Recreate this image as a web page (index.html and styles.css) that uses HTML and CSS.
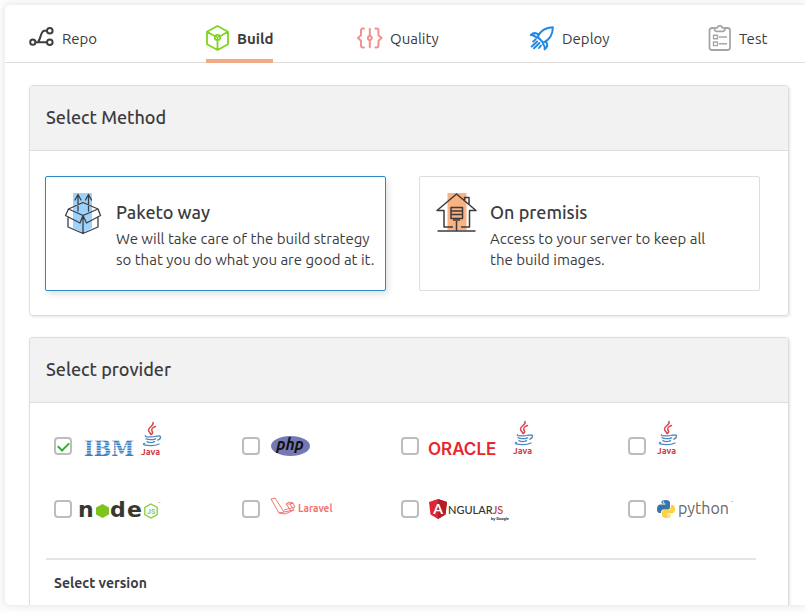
FILE: index.html
```html
<!DOCTYPE html>
<html lang="en">
<head>
<meta charset="utf-8">
<meta name="viewport" content="width=device-width, initial-scale=1">
<title>Build</title>
<link rel="stylesheet" href="styles.css">
</head>
<body>
<main class="shell">
  <nav class="tabs">
    <a class="tab" href="#repo">
      <svg width="26" height="26" viewBox="0 0 26 26" fill="none" stroke="#3f3f42" stroke-width="2"><circle cx="3.800" cy="17.200" r="2.600"/><circle cx="20.800" cy="17.200" r="2.800"/><circle cx="20.800" cy="5.800" r="2.800"/><path d="M6.600 17.200H18M9 16.500c2.800-1.500 2.300-9.500 6-10.700h3"/></svg>
      Repo</a>
    <a class="tab active" href="#build" aria-current="page">
      <svg width="24" height="26" viewBox="0 0 24 26" fill="none" stroke="#7fd321" stroke-width="1.800" stroke-linejoin="round"><path d="M11.500 1 22 6.800v12.400L11.500 25 1 19.200V6.800zM1 6.800l8 4.400M22 6.800l-8 4.400M11.500 25v-9"/><circle cx="11.500" cy="12.500" r="2.700"/><path d="M9.500 10.800l2 2 2-2M11.500 12.800V16" stroke-width="1.300"/></svg>
      Build</a>
    <a class="tab" href="#quality">
      <svg width="26" height="26" viewBox="0 0 26 26" fill="none" stroke="#f3918f" stroke-width="2" stroke-linecap="round" stroke-linejoin="round"><path d="M7 3.500H6Q4 3.500 4 5.500v4.800L1 13l3 2.700v4.800q0 2 2 2h1M18.500 3.500h1q2 0 2 2v4.800l3 2.700-3 2.700v4.800q0 2-2 2h-1M12.800 3.800v7M12.800 15.200v7"/><circle cx="12.800" cy="13" r="1.900"/></svg>
      Quality</a>
    <a class="tab" href="#deploy">
      <svg width="26" height="26" viewBox="0 0 26 26" fill="none" stroke="#2089e5" stroke-width="2" stroke-linecap="round" stroke-linejoin="round"><path d="M8.500 11.800C11.500 5.500 16 2.500 23.800 2.200c.2 7.800-3.200 12.300-9.500 15.600zM9.500 9.500Q5.500 6.500 1.800 10q2.800-.4 6 2.800M17 16.800q3 3.500-1.300 7.500.5-3-1.700-5.500M6.500 14.500l-2.300 2M8.200 16.500l-5.500 5M10.500 18l-5.500 5.200M12 20.500l-2 2.500"/></svg>
      Deploy</a>
    <a class="tab" href="#test">
      <svg width="24" height="26" viewBox="0 0 24 26" fill="none" stroke="#a6a6a6" stroke-width="1.800" stroke-linejoin="round"><path d="M6.500 3H4Q1.500 3 1.500 5.500v17Q1.500 25 4 25h15.500q2.500 0 2.500-2.500v-17Q22 3 19.500 3H17M6.500 2.800h2.800q.2-2 2.500-2t2.500 2H17v1.700Q16.500 6.300 15 6.300H8.500Q7 6.300 6.500 4.500z"/><path d="M5.500 10.200h4v3.600h-4zM5.500 17h4v3.600h-4zM11 12h8M11 18.800h8" stroke-width="1.400"/></svg>
      Test</a>
  </nav>

  <section class="panel">
    <h2 class="panel-head">Select Method</h2>
    <div class="methods">
      <button class="method selected" type="button" aria-pressed="true">
        <svg class="method-icon" width="42" height="42" viewBox="0 0 42 42" fill="none"><path fill="#9fd2fa" d="M11 0h19v35l-9 5-10-5z"/><g stroke="#3b4046" stroke-width="1.300" stroke-linejoin="round" stroke-linecap="round"><path d="M21 9.500 6.500 16 21 22.500 36 16zM6.500 16l-3 6.500L18 30l3-7.500L24.500 30 38.500 22.500 36 16M6 24.500V34l15 6.500L36 34v-9.500M21 22.500v18M16 18V1.500M26.500 18V1.500M13 7l3-5.500L19 7M23.500 7l3-5.500 3 5.500"/></g></svg>
        <span class="method-text"><strong>Paketo way</strong><span>We will take care of the build strategy<br>so that you do what you are good at it.</span></span>
      </button>
      <button class="method" type="button" aria-pressed="false">
        <svg class="method-icon" width="42" height="42" viewBox="0 0 42 42" fill="none"><path fill="#f8b283" d="M11.500 0h19v37h-19z"/><g stroke="#3d3a3a" stroke-width="1.500" stroke-linejoin="round"><path d="M17 34H8V17.500H1L20.500 1 40 17.500h-6.500V34H25M28.500 7V4.500H33V11M1.500 38h38M20.500 28v10M17 27h7"/><path d="M15 14.500h11.500v11H15zM15 18h11.500M15 21.500h11.500"/></g></svg>
        <span class="method-text"><strong>On premisis</strong><span>Access to your server to keep all<br>the build images.</span></span>
      </button>
    </div>
  </section>

  <section class="panel panel-open">
    <h2 class="panel-head">Select provider</h2>
    <div class="providers">
      <label class="option">
        <input type="checkbox" aria-label="IBM Java" checked>
        <svg width="86" height="52" viewBox="0 0 86 52">
          <text x="5" y="36" class="ibm">IBM</text>
          <path d="M5 20.500h52M5 23h52M5 25.500h52M5 28h52M5 30.500h52M5 33h52" stroke="#fff" stroke-width=".7"/>
          <svg x="62" y="1" width="24" height="38" viewBox="0 0 24 38">
            <g id="java">
              <g fill="none" stroke-linecap="round">
                <path d="M12 1.500c1.500 3-4.500 4.500-4.500 7.500 0 2 2 2.500 2.500 4.500M14.500 5.500c-3 1-4.500 2.500-3.500 4.500 1 1.500 1 2.500-.5 3.500" stroke="#d9474b" stroke-width="1.500"/>
                <path d="M4.500 14.800c-2 1.300 8 1.600 11 .2M5 17.800c2 1.200 7 1.200 9.500 0M6 20.600c2 1.100 5.500 1 7.500 0M3.500 22.300c-5 2 9 3.500 14.500.7M16 15.500c4-2 5 2 .8 3.700" stroke="#4d86bd" stroke-width="1.300"/>
              </g>
              <text x="0" y="34" class="java-word">Java</text>
            </g>
          </svg>
        </svg>
      </label>
      <label class="option">
        <input type="checkbox" aria-label="PHP">
        <svg width="46" height="52" viewBox="0 0 46 52"><ellipse cx="23.500" cy="26" rx="19.500" ry="10" fill="#7479b5"/><text x="23" y="30" class="php">php</text></svg>
      </label>
      <label class="option">
        <input type="checkbox" aria-label="Oracle Java">
        <svg width="112" height="52" viewBox="0 0 112 52"><text x="2" y="35" class="oracle">ORACLE</text><use href="#java" x="87" y="0"/></svg>
      </label>
      <label class="option">
        <input type="checkbox" aria-label="Java">
        <svg width="30" height="52" viewBox="0 0 30 52"><use href="#java" x="4" y="0"/></svg>
      </label>
      <label class="option">
        <input type="checkbox" aria-label="Node.js">
        <svg width="86" height="30" viewBox="0 0 86 30"><text x="-1" y="23" class="node">n</text><path d="m23.500 10 6.500 3.500v7L23.500 24 17 20.500v-7z" fill="#7dc51d"/><text x="31" y="23" class="node">d</text><text x="48" y="23" class="node">e</text><path d="m72 10 6.200 3.500v7L72 24l-6.200-3.500v-7z" fill="none" stroke="#86cf3a" stroke-width="1.300"/><text x="68" y="20" class="node-js">JS</text><text x="79" y="11" class="trademark">™</text></svg>
      </label>
      <label class="option">
        <input type="checkbox" aria-label="Laravel">
        <svg width="70" height="30" viewBox="0 0 70 30"><path d="m4 5 4-1 9 14 10-2-4-6 3-1 2 4-11 3M4 5l8 14 6 1 9-4M12 19l5-1M19 10l3-2 4 1-3 1zM19 10l5 7" fill="none" stroke="#ef766e" stroke-linejoin="round"/><text x="31" y="18" class="laravel">Laravel</text></svg>
      </label>
      <label class="option">
        <input type="checkbox" aria-label="AngularJS">
        <svg width="90" height="30" viewBox="0 0 90 30"><path d="m12 5 9 3-1.500 12.500L12 25l-7.500-4.500L3 8z" fill="#dd2630"/><path d="m12 5 9 3-1.500 12.500L12 25z" fill="#b21f27"/><text x="12" y="20" class="angular-a">A</text><text x="22" y="20" class="angular">NGULAR<tspan fill="#c0393c">JS</tspan></text><text x="65" y="26" class="google">by Google</text></svg>
      </label>
      <label class="option">
        <input type="checkbox" aria-label="Python">
        <svg width="86" height="30" viewBox="0 0 86 30"><path d="M12.500 6Q17 6 17 9v4q0 2.500-2.500 2.500h-4Q8 15.500 8 19H6.500Q4 19 4 15t3-4.500h5.500v-1H8.500V8q0-2 4-2z" fill="#3974a8"/><path d="M13.500 24Q9 24 9 21v-3q0-2 2.500-2H15q3 0 3-5h1.500q2.500 0 2.500 4t-3 4.500h-5.500v1h4V22q0 2-4 2z" fill="#fdd43f"/><circle cx="10.500" cy="8" r=".8" fill="#fff"/><circle cx="15.500" cy="22" r=".8" fill="#fff"/><text x="25" y="20" class="python">python</text><text x="78" y="10" class="trademark">™</text></svg>
      </label>
    </div>
    <div class="version"><h3>Select version</h3></div>
  </section>
</main>
</body>
</html>
```
FILE: styles.css
```css
* { box-sizing: border-box; }

body {
  margin: 0;
  padding: 5px 0 7px 5px;
  background: #fcfcfc;
  color: #3c3c3e;
  font: 15px/21px Ubuntu, "Noto Sans", sans-serif;
}

.shell {
  background: #fff;
  border-radius: 5px 0 0 5px;
  box-shadow: 0 0 6px 1px #e7e7e7;
  overflow: hidden;
}

.tabs {
  display: grid;
  grid-template-columns: 177fr 151fr 172fr 179fr 97fr;
  height: 58px;
  padding-left: 24px;
  border-bottom: 1px solid #ddd;
}

.tab {
  display: flex;
  align-items: center;
  justify-self: start;
  gap: 7px;
  height: 58px;
  padding-top: 12px;
  border-bottom: 4px solid transparent;
  color: inherit;
  text-decoration: none;
}

.tab.active { border-color: #f0ab86; font-weight: 700; }

.panel {
  margin: 22px 16px 0 24px;
  border: 1px solid #ddd;
  border-radius: 4px;
  box-shadow: 1px 1px 3px #e4e4e4;
}

.panel + .panel { margin-top: 21px; }

.panel-open { border-bottom: 0; border-radius: 4px 4px 0 0; }

.panel-head {
  margin: 0;
  padding: 19px 16px 21px;
  background: #f2f2f2;
  border-bottom: 1px solid #ddd;
  border-radius: 3px 3px 0 0;
  font-size: 18px;
  line-height: 24px;
  font-weight: 500;
}

.methods {
  display: grid;
  grid-template-columns: 1fr 1fr;
  gap: 33px;
  padding: 25px 28px 24px 15px;
}

.method {
  display: flex;
  align-items: flex-start;
  gap: 12px;
  min-height: 115px;
  padding: 16px 0 16px 16px;
  background: #fff;
  border: 1px solid #ddd;
  border-radius: 2px;
  color: inherit;
  font: inherit;
  text-align: left;
  white-space: nowrap;
}

.method.selected { border-color: #3288c7; box-shadow: 2px 3px 6px #e0e0e0; }

.method-icon { flex: none; }

.method-text { padding-top: 7px; }

.method strong {
  display: block;
  margin-bottom: 4px;
  font-size: 18px;
  line-height: 24px;
  font-weight: 500;
}

.providers {
  display: grid;
  grid-template-columns: 188fr 159fr 226fr 160fr;
  row-gap: 22px;
  padding: 17px 0 34px 24px;
}

.option { display: flex; align-items: center; gap: 7px; }

.option input {
  appearance: none;
  flex: none;
  display: grid;
  place-items: center;
  width: 18px;
  height: 18px;
  margin: 0;
  border: 2px solid #bdbdbd;
  border-radius: 4px;
  background: #fff;
}

.option input:checked::after {
  content: "";
  width: 9px;
  height: 5px;
  border: solid #25b52b;
  border-width: 0 0 2px 2px;
  transform: translateY(-1px) rotate(-45deg);
}

.version {
  margin: 0 32px 0 16px;
  padding: 13px 8px 11px;
  border-top: 2px solid #e4e4e4;
}

.version h3 { margin: 0; font-size: 14px; line-height: 21px; font-weight: 700; }

.java-word { font: 700 9px Ubuntu, "Noto Sans", sans-serif; fill: #d2383d; }
.ibm { font: 700 23px "DejaVu Serif Condensed", "DejaVu Serif", serif; fill: #397fc5; }
.php { font: italic 700 16px Ubuntu, "Open Sans", sans-serif; fill: #111; text-anchor: middle; }
.oracle { font: 600 17px Inter, sans-serif; fill: #e8262c; }
.node { font: 700 22px "DejaVu Sans", sans-serif; fill: #37392f; }
.node-js { font: 700 7px Roboto, sans-serif; fill: #86cf3a; }
.trademark { font: 4px Roboto, sans-serif; fill: #888; }
.laravel { font: 700 10px Ubuntu, "Noto Sans", sans-serif; fill: #ef766e; }
.angular-a { font: 700 14px Lato, sans-serif; fill: #fff; text-anchor: middle; }
.angular { font: 500 11px Lato, sans-serif; fill: #333; }
.google { font: 700 4px Roboto, sans-serif; fill: #333; }
.python { font: 16px Ubuntu, "Noto Sans", sans-serif; fill: #666; }
```
